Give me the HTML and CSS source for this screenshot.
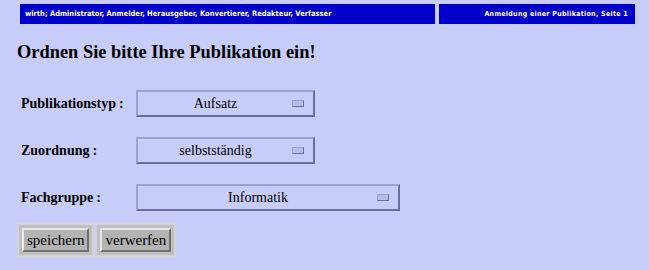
FILE: index.html
```html
<!DOCTYPE html>
<html lang="de">
<head>
    <meta charset="UTF-8">
    <title>Anmeldung einer Publikation</title>
    <link rel="stylesheet" href="styles.css">
</head>
<body>
<div class="topbar">
    <div class="bar bar-user">wirth; Administrator, Anmelder, Herausgeber, Konvertierer, Redakteur, Verfasser</div>
    <div class="bar bar-page">Anmeldung einer Publikation, Seite 1</div>
</div>

<h1 class="title">Ordnen Sie bitte Ihre Publikation ein!</h1>

<form class="form">
    <div class="row">
        <label class="label">Publikationstyp<span class="colon">:</span></label>
        <div class="select">Aufsatz<span class="knob"></span></div>
    </div>
    <div class="row">
        <label class="label">Zuordnung<span class="colon">:</span></label>
        <div class="select">selbstständig<span class="knob"></span></div>
    </div>
    <div class="row row-last">
        <label class="label">Fachgruppe<span class="colon">:</span></label>
        <div class="select wide">Informatik<span class="knob"></span></div>
    </div>
    <div class="buttons">
        <span class="btn-frame"><button type="button" class="btn">speichern</button></span>
        <span class="btn-frame"><button type="button" class="btn">verwerfen</button></span>
    </div>
</form>
</body>
</html>
```
FILE: styles.css
```css
:root {
    --bg: #c8ccf8;
    --bar: #0000c8;
    --border-light: #9ea2cc;
    --border-dark: #6c6f94;
    --btn-grey: #c0c0c0;
}

* {
    box-sizing: border-box;
    margin: 0;
    padding: 0;
}

body {
    background: var(--bg);
    font-family: "Liberation Serif", "Times New Roman", serif;
    color: #000;
    padding: 4px 14px 0 20px;
}

.topbar {
    display: flex;
    gap: 4px;
    height: 20px;
}

.bar {
    background: var(--bar);
    color: #fff;
    font-family: "DejaVu Sans Condensed", "DejaVu Sans", sans-serif;
    font-size: 7px;
    font-weight: bold;
    line-height: 20px;
    white-space: nowrap;
    overflow: hidden;
}

.bar-user {
    width: 415px;
    padding-left: 5px;
    font-size: 7.5px;
}

.bar-page {
    flex: 1;
    text-align: right;
    padding-right: 7px;
    letter-spacing: 0.3px;
}

.title {
    font-size: 18.4px;
    font-weight: bold;
    margin: 17px 0 0 -3px;
    line-height: 22px;
}

.form {
    margin-top: 27px;
}

.row {
    display: flex;
    align-items: center;
    height: 27px;
    margin-bottom: 20px;
}

.row-last {
    margin-bottom: 12px;
}

.label {
    width: 116px;
    padding-left: 1px;
    font-size: 14px;
    font-weight: bold;
}

.colon {
    margin-left: 3px;
}

.select {
    position: relative;
    width: 179px;
    height: 27px;
    border: 2px solid;
    border-color: var(--border-light) var(--border-dark) var(--border-dark) var(--border-light);
    font-size: 14px;
    line-height: 23px;
    text-align: center;
    padding-right: 20px;
}

.select.wide {
    width: 264px;
}

.knob {
    position: absolute;
    right: 9px;
    top: 8px;
    width: 12px;
    height: 7px;
    border: 1px solid;
    border-color: var(--border-light) var(--border-dark) var(--border-dark) var(--border-light);
    background: #b8bce8;
}

.buttons {
    display: flex;
    align-items: flex-start;
    gap: 1px;
    margin-left: -3px;
}

.btn-frame {
    display: block;
    background: var(--btn-grey);
    padding: 3px;
    border: 2px solid #d4d4d4;
}

.btn {
    display: block;
    font-family: "Liberation Serif", serif;
    font-size: 15px;
    line-height: 18px;
    background: #b4b4b4;
    border: 2px solid;
    border-color: #e8e8e8 #707070 #707070 #e8e8e8;
    padding: 1px 3px 1px;
    color: #000;
}
```
